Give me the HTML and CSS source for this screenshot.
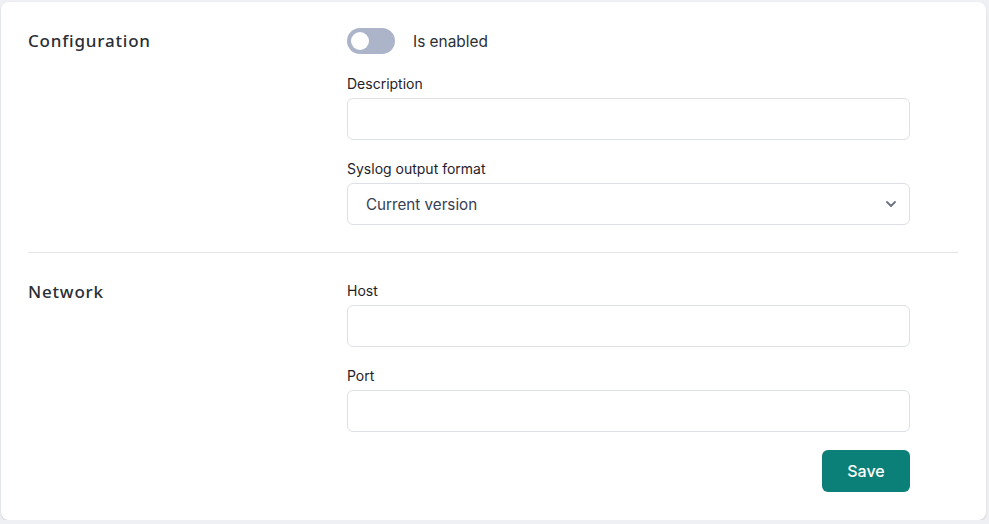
FILE: index.html
```html
<!DOCTYPE html>
<html lang="en">
<head>
    <meta charset="UTF-8">
    <meta name="viewport" content="width=device-width, initial-scale=1.0">
    <title>Syslog settings</title>
    <link rel="stylesheet" href="styles.css">
</head>
<body>
    <div class="card">
        <div class="section">
            <h2 class="section-title">Configuration</h2>
            <div class="fields">
                <label class="toggle-row">
                    <span class="toggle"><span class="knob"></span></span>
                    <span class="toggle-label">Is enabled</span>
                </label>

                <div class="field">
                    <label class="field-label" for="description">Description</label>
                    <input class="input" id="description" type="text">
                </div>

                <div class="field">
                    <label class="field-label" for="format">Syslog output format</label>
                    <div class="select-wrap">
                        <select class="input select" id="format">
                            <option>Current version</option>
                            <option>Legacy</option>
                        </select>
                        <svg class="chevron" width="20" height="20" viewBox="0 0 20 20" fill="none">
                            <path d="M6 8l4 4 4-4" stroke="currentColor" stroke-width="1.8" stroke-linecap="round" stroke-linejoin="round"/>
                        </svg>
                    </div>
                </div>
            </div>
        </div>

        <div class="divider"></div>

        <div class="section">
            <h2 class="section-title">Network</h2>
            <div class="fields">
                <div class="field">
                    <label class="field-label" for="host">Host</label>
                    <input class="input" id="host" type="text">
                </div>

                <div class="field">
                    <label class="field-label" for="port">Port</label>
                    <input class="input" id="port" type="text">
                </div>

                <div class="actions">
                    <button class="save-button">Save</button>
                </div>
            </div>
        </div>
    </div>
</body>
</html>
```

FILE: styles.css
```css
body {
    margin: 0;
    padding: 2px 3px 0 1px;
    background: #eef0f3;
    font-family: Inter, "Noto Sans", sans-serif;
    color: #1f2937;
}

.card {
    background: white;
    border-radius: 8px;
    box-shadow: 0 1px 2px rgba(17, 24, 39, 0.15);
    padding: 0 28px 0 27px;
    height: 518px;
    box-sizing: border-box;
}

.section {
    display: flex;
    padding: 26px 0 27px;
}

.section + .divider + .section {
    padding: 28px 0 28px;
}

.section-title {
    width: 319px;
    margin: 0;
    font-family: "Noto Sans", sans-serif;
    font-size: 17px;
    font-weight: 500;
    line-height: 26px;
    color: #2a2e35;
    letter-spacing: 0.8px;
}

.section + .divider + .section .section-title {
    line-height: 22px;
}

.fields {
    width: 563px;
    display: flex;
    flex-direction: column;
    gap: 19px;
}

.toggle-row {
    display: flex;
    align-items: center;
    gap: 18px;
    height: 26px;
    margin-bottom: 1px;
    cursor: pointer;
}

.toggle {
    width: 48px;
    height: 26px;
    border-radius: 13px;
    background: #acb4ca;
    display: flex;
    align-items: center;
    padding: 0 4px;
    box-sizing: border-box;
}

.knob {
    width: 18px;
    height: 18px;
    border-radius: 50%;
    background: white;
}

.toggle-label {
    font-size: 15.4px;
    color: #2b2f36;
}

.field {
    display: flex;
    flex-direction: column;
    gap: 4px;
}

.field-label {
    font-size: 14px;
    font-weight: 400;
    line-height: 20px;
    color: #1f2329;
}

.input {
    height: 42px;
    box-sizing: border-box;
    border: 1px solid #dde0e6;
    border-radius: 6px;
    padding: 0 18px;
    font-family: inherit;
    font-size: 15.2px;
    color: #374151;
    background: white;
    outline: none;
}

.select-wrap {
    position: relative;
}

.select {
    width: 100%;
    appearance: none;
    -webkit-appearance: none;
}

.chevron {
    position: absolute;
    right: 9px;
    top: 11px;
    color: #6b7280;
}

.actions {
    display: flex;
    justify-content: flex-end;
    margin-top: -1px;
}

.save-button {
    width: 88px;
    height: 42px;
    border: none;
    border-radius: 6px;
    background: #0b8078;
    color: white;
    font-family: inherit;
    font-size: 16px;
    font-weight: 500;
    cursor: pointer;
}

.divider {
    height: 1px;
    background: #e3e5ea;
}
```
